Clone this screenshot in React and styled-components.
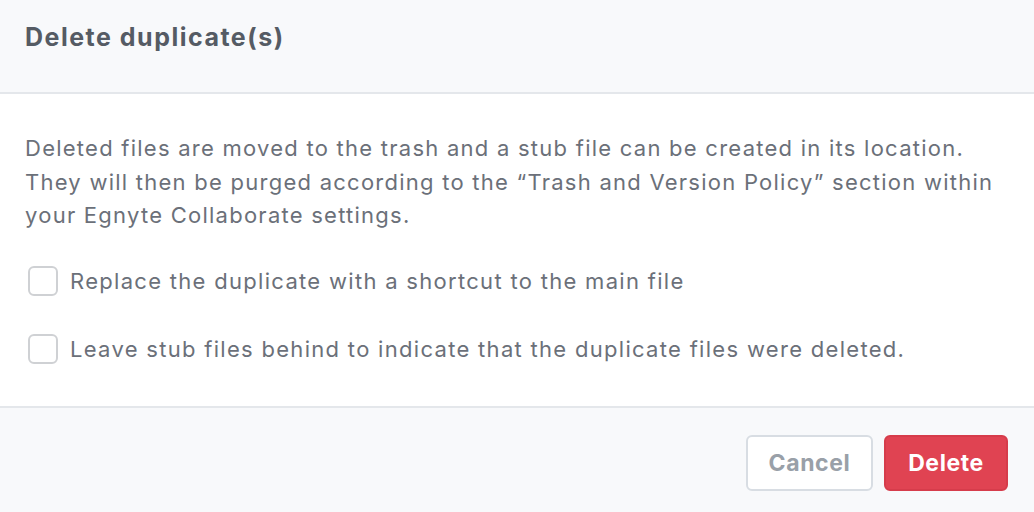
import React, { useState } from 'react'
import styled, { createGlobalStyle } from 'styled-components'

const GlobalStyle = createGlobalStyle`
  html, body {
    margin: 0;
    padding: 0;
    background: #ffffff;
  }
  body {
    font-family: Inter, "Noto Sans", sans-serif;
  }
`

function Dialog() {
    const [replace, setReplace] = useState(false)
    const [leaveStub, setLeaveStub] = useState(false)

    return (
        <DialogContainer>
            <Header>
                <Title>Delete duplicate(s)</Title>
            </Header>
            <Body>
                <Description>
                    Deleted files are moved to the trash and a stub file can be created in its location.<br />
                    They will then be purged according to the “Trash and Version Policy” section within<br />
                    your Egnyte Collaborate settings.
                </Description>
                <Options>
                    <Option>
                        <Box checked={replace} onClick={() => setReplace(!replace)} />
                        <Label>Replace the duplicate with a shortcut to the main file</Label>
                    </Option>
                    <Option>
                        <Box checked={leaveStub} onClick={() => setLeaveStub(!leaveStub)} />
                        <Label>Leave stub files behind to indicate that the duplicate files were deleted.</Label>
                    </Option>
                </Options>
            </Body>
            <Footer>
                <Button>Cancel</Button>
                <Button danger>Delete</Button>
            </Footer>
        </DialogContainer>
    )
}

export default function App() {
    return (
        <>
            <GlobalStyle />
            <Dialog />
        </>
    )
}

const DialogContainer = styled.div`
    width: 1034px;
    height: 512px;
    display: flex;
    flex-direction: column;
    overflow: hidden;
    background: #ffffff;
`
const Header = styled.div`
    height: 94px;
    flex-shrink: 0;
    box-sizing: border-box;
    padding: 0 25px 18px;
    display: flex;
    align-items: center;
    background: #f8f9fb;
    border-bottom: 2px solid #e4e7eb;
`
const Title = styled.h2`
    margin: 0;
    font-size: 25px;
    font-weight: 700;
    color: #555b64;
    letter-spacing: 1.5px;
`
const Body = styled.div`
    flex: 1;
    padding: 38px 25px 0;
`
const Description = styled.p`
    margin: 0;
    font-size: 22px;
    line-height: 33.5px;
    letter-spacing: 1.25px;
    white-space: nowrap;
    color: #6b7079;
`
const Options = styled.div`
    display: flex;
    flex-direction: column;
    gap: 38px;
    margin-top: 33px;
    padding-left: 3px;
`
const Option = styled.label`
    display: flex;
    align-items: center;
    gap: 12px;
    cursor: pointer;
`
const Box = styled.span`
    width: 30px;
    height: 30px;
    box-sizing: border-box;
    border: 2px solid ${p => (p.checked ? '#e04352' : '#cfd1d4')};
    background: ${p => (p.checked ? '#e04352' : '#ffffff')};
    border-radius: 6px;
    flex-shrink: 0;
`
const Label = styled.span`
    font-size: 22px;
    letter-spacing: 1.3px;
    white-space: nowrap;
    color: #6b7079;
`
const Footer = styled.div`
    height: 106px;
    flex-shrink: 0;
    box-sizing: border-box;
    display: flex;
    justify-content: flex-end;
    align-items: flex-start;
    gap: 11px;
    padding: 27px 26px 0;
    background: #f8f9fb;
    border-top: 2px solid #e4e7eb;
`
const Button = styled.button`
    height: 56px;
    padding: 0 18px;
    min-width: ${p => (p.danger ? '124px' : '127px')};
    border-radius: 6px;
    font-family: Inter, "Noto Sans", sans-serif;
    font-size: 23px;
    font-weight: 700;
    letter-spacing: 0.6px;
    cursor: pointer;
    border: 2px solid ${p => (p.danger ? '#d63c4b' : '#d8dde3')};
    background: ${p => (p.danger ? '#e04352' : '#ffffff')};
    color: ${p => (p.danger ? '#ffffff' : '#99a0a8')};
`
